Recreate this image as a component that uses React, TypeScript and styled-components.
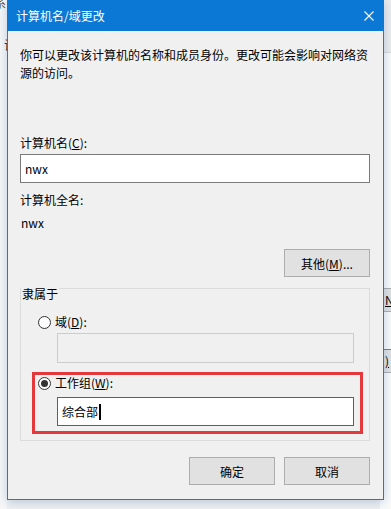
import React from 'react';
import styled, { createGlobalStyle } from 'styled-components';

const GlobalStyle = createGlobalStyle`
  html, body {
    margin: 0;
    padding: 0;
  }
  body {
    font-family: "Noto Sans CJK SC", "Liberation Sans", sans-serif;
    font-size: 12px;
    color: #000;
  }
`;

// desktop behind the dialog
const Desktop = styled.div`
  position: relative;
  width: 391px;
  height: 509px;
  overflow: hidden;
  background: #f0f0f0;
  display: flex;
  align-items: flex-start;
  padding-left: 7px;
  box-sizing: border-box;
`;

const BackLeft = styled.div`
  position: absolute;
  left: 0;
  top: 0;
  width: 7px;
  height: 509px;
  overflow: hidden;
  background: #f7f7f7;
`;

const BackText = styled.div<{ $top: number; $left: number; $color?: string }>`
  position: absolute;
  top: ${p => p.$top}px;
  left: ${p => p.$left}px;
  font-size: 12px;
  line-height: 14px;
  color: ${p => p.$color || '#000'};
  white-space: nowrap;
`;

const BackRight = styled.div`
  position: absolute;
  left: 380px;
  top: 0;
  width: 11px;
  height: 509px;
  overflow: hidden;
  background: #ececec;
`;

const BackPane = styled.div`
  position: absolute;
  left: 0;
  top: 52px;
  right: 0;
  bottom: 0;
  background: #fafafa;
  border-top: 1px solid #d9d9d9;
`;

const BackButton = styled.div<{ $top: number; $accent?: boolean }>`
  position: absolute;
  left: 4px;
  top: ${p => p.$top}px;
  width: 40px;
  height: 22px;
  border-top: 1px solid ${p => (p.$accent ? '#3c8fd8' : '#adadad')};
  border-bottom: 1px solid #adadad;
  background: #e1e1e1;
  font-size: 12px;
  line-height: 22px;
  padding-left: 1px;
  text-decoration: underline;
`;

const Dialog = styled.div`
  position: relative;
  z-index: 1;
  width: 377px;
  height: 500px;
  box-sizing: border-box;
  border: 1px solid #1c7dd0;
  border-top: none;
  background: #f0f0f0;
  box-shadow: 0 2px 10px rgba(0, 80, 160, 0.25);
  display: flex;
  flex-direction: column;
`;

const TitleBar = styled.div`
  height: 31px;
  margin: 0 -1px;
  background: #0b78d5;
  color: #fff;
  display: flex;
  align-items: center;
  justify-content: space-between;
  padding: 0 10px 0 9px;
  font-size: 12px;
`;

const Body = styled.div`
  display: flex;
  flex-direction: column;
  padding: 15px 13px 0 12px;
`;

const Text = styled.div<{ $mt?: number }>`
  line-height: 18px;
  margin-top: ${p => p.$mt || 0}px;
  white-space: nowrap;
`;

const Para = styled.div`
  line-height: 18px;
  width: 352px;
`;

const Key = styled.span`
  text-decoration: underline;
`;

const TextBox = styled.div<{ $mt?: number; $variant?: 'normal' | 'disabled' | 'focus'; $ml?: number; $mr?: number }>`
  box-sizing: border-box;
  height: ${p => (p.$variant === 'disabled' ? 30 : 29)}px;
  margin-top: ${p => p.$mt || 0}px;
  margin-left: ${p => p.$ml || 0}px;
  margin-right: ${p => p.$mr || 0}px;
  border: 1px solid
    ${p => (p.$variant === 'disabled' ? '#cccccc' : p.$variant === 'focus' ? '#0078d7' : '#7a7a7a')};
  background: ${p => (p.$variant === 'disabled' ? '#f0f0f0' : '#fff')};
  display: flex;
  align-items: center;
  padding-left: 4px;
  line-height: 18px;
`;

const Caret = styled.span`
  display: inline-block;
  width: 2px;
  height: 16px;
  background: #000;
  margin-left: 1px;
`;

const ButtonRow = styled.div<{ $mt: number }>`
  display: flex;
  justify-content: flex-end;
  gap: 9px;
  margin-top: ${p => p.$mt}px;
`;

const Button = styled.div<{ $h?: number }>`
  box-sizing: border-box;
  width: 86px;
  height: ${p => p.$h || 28}px;
  background: #e1e1e1;
  border: 1px solid #adadad;
  display: flex;
  align-items: center;
  justify-content: center;
  font-size: 12px;
`;

const Group = styled.div`
  position: relative;
  margin-top: 11px;
  height: 153px;
  box-sizing: border-box;
  border: 1px solid #dcdcdc;
  display: flex;
  flex-direction: column;
  align-items: stretch;
`;

const Legend = styled.div`
  align-self: flex-start;
  margin-top: -4px;
  padding: 0 1px;
  background: #f0f0f0;
  line-height: 18px;
`;

const RadioRow = styled.div<{ $mt: number }>`
  display: flex;
  align-items: center;
  gap: 4px;
  padding-left: 17px;
  margin-top: ${p => p.$mt}px;
  line-height: 18px;
`;

const RadioCircle = styled.span<{ $checked?: boolean }>`
  box-sizing: border-box;
  width: 13px;
  height: 13px;
  border-radius: 50%;
  border: 1px solid #333;
  background: #fff;
  display: flex;
  align-items: center;
  justify-content: center;
  &::after {
    content: '';
    width: 7px;
    height: 7px;
    border-radius: 50%;
    background: ${p => (p.$checked ? '#333' : 'transparent')};
  }
`;

// red annotation frame drawn over the workgroup option
const Highlight = styled.div`
  position: absolute;
  left: 11px;
  top: 83px;
  width: 331px;
  height: 62px;
  box-sizing: border-box;
  border: 3px solid #e3393c;
  pointer-events: none;
`;

function CloseIcon() {
  return (
    <svg width="10" height="10" viewBox="0 0 10 10">
      <path d="M0.5 0.5 L9.5 9.5 M9.5 0.5 L0.5 9.5" stroke="#fff" strokeWidth="1.1" />
    </svg>
  );
}

export default function App() {
  return (
    <>
      <GlobalStyle />
      <Desktop>
        <BackLeft>
          <BackText $top={-4} $left={-6} $color="#555">系</BackText>
          <BackText $top={38} $left={4}>计</BackText>
        </BackLeft>
        <BackRight>
          <BackPane>
            <BackButton $top={235}>N</BackButton>
            <BackButton $top={296} $accent>)</BackButton>
          </BackPane>
        </BackRight>

        <Dialog>
          <TitleBar>
            <span>计算机名/域更改</span>
            <CloseIcon />
          </TitleBar>
          <Body>
            <Para>你可以更改该计算机的名称和成员身份。更改可能会影响对网络资源的访问。</Para>

            <Text $mt={52}>
              计算机名(<Key>C</Key>):
            </Text>
            <TextBox $mt={2}>nwx</TextBox>

            <Text $mt={8}>计算机全名:</Text>
            <Text $mt={5} style={{ paddingLeft: 1 }}>nwx</Text>

            <ButtonRow $mt={17}>
              <Button>
                其他(<Key>M</Key>)...
              </Button>
            </ButtonRow>

            <Group>
              <Legend>隶属于</Legend>
              <RadioRow $mt={10}>
                <RadioCircle />
                <span>
                  域(<Key>D</Key>):
                </span>
              </RadioRow>
              <TextBox $variant="disabled" $mt={2} $ml={36} $mr={15} />
              <RadioRow $mt={11}>
                <RadioCircle $checked />
                <span>
                  工作组(<Key>W</Key>):
                </span>
              </RadioRow>
              <TextBox $variant="focus" $mt={5} $ml={36} $mr={15}>
                综合部
                <Caret />
              </TextBox>
              <Highlight />
            </Group>

            <ButtonRow $mt={16}>
              <Button>确定</Button>
              <Button>取消</Button>
            </ButtonRow>
          </Body>
        </Dialog>
      </Desktop>
    </>
  );
}
